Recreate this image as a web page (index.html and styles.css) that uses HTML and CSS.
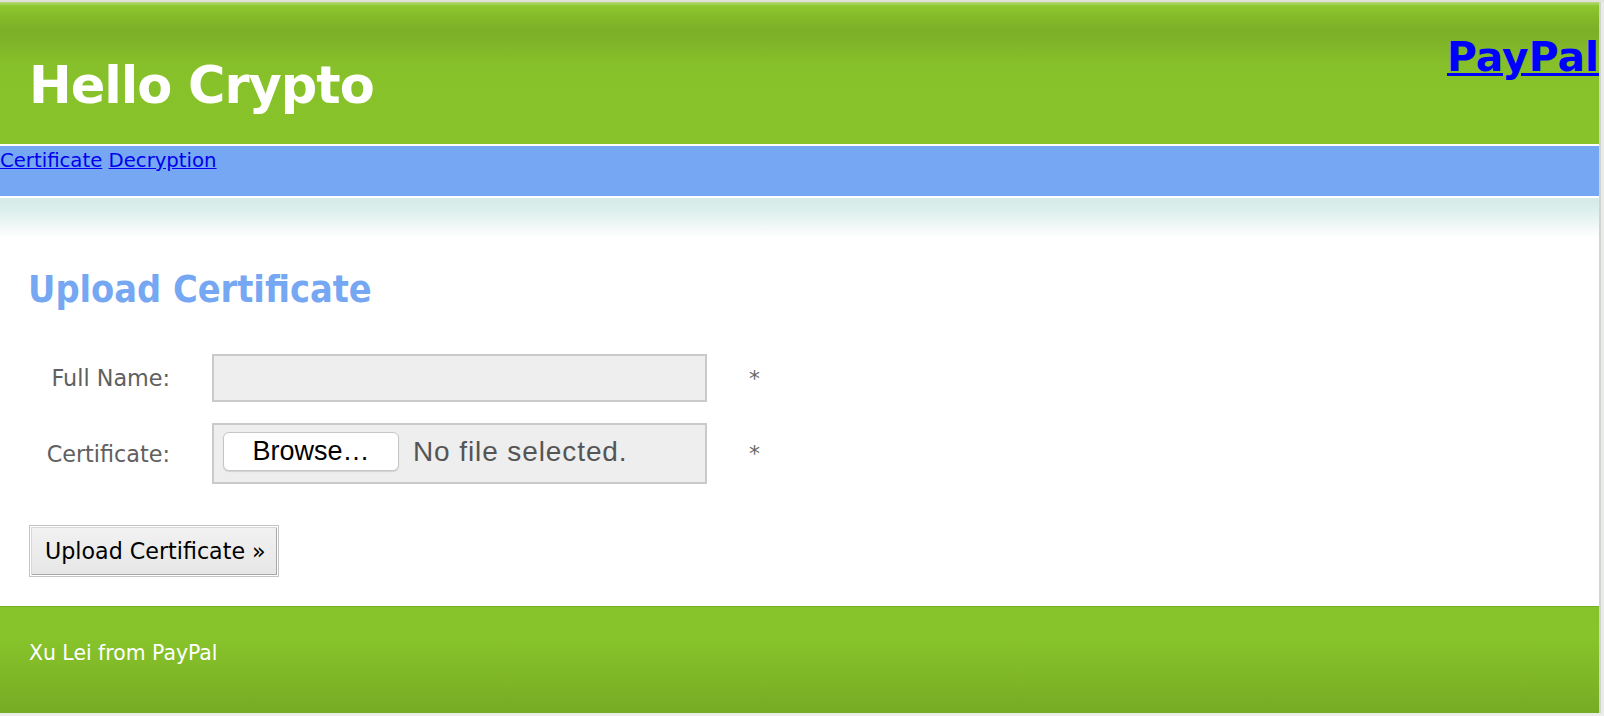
FILE: index.html
```html
<!DOCTYPE html>
<html lang="en">
<head>
<meta charset="utf-8">
<title>Hello Crypto</title>
<link rel="stylesheet" href="styles.css">
</head>
<body>
<div class="page">
  <header class="masthead">
    <h1 class="site-title">Hello Crypto</h1>
    <a class="brand-link" href="#">PayPal</a>
  </header>
  <nav class="menu">
    <a href="#">Certificate</a> <a href="#">Decryption</a>
  </nav>
  <main class="content">
    <h2 class="page-title">Upload Certificate</h2>
    <form class="upload-form">
      <div class="field-grid">
        <label class="field-label">Full Name:</label>
        <div class="text-box"></div>
        <span class="required">*</span>
        <label class="field-label">Certificate:</label>
        <div class="file-box">
          <span class="file-button">Browse…</span>
          <span class="file-status">No file selected.</span>
        </div>
        <span class="required">*</span>
      </div>
      <button type="button" class="submit-button">Upload Certificate »</button>
    </form>
  </main>
  <footer class="site-footer">Xu Lei from PayPal</footer>
</div>
</body>
</html>
```
FILE: styles.css
```css
html, body {
  margin: 0;
  padding: 0;
}
body {
  background: #e9ece8;
  height: 716px;
  overflow: hidden;
  border-top: 2px solid #e2e3dd;
  box-sizing: border-box;
  font-family: "DejaVu Sans", Verdana, sans-serif;
}
.page {
  width: 1599px;
  box-shadow: 2px 0 0 #cfd5cf;
}
.masthead {
  height: 144px;
  display: flex;
  justify-content: space-between;
  align-items: flex-start;
  padding-left: 29px;
  box-sizing: border-box;
  border-bottom: 2px solid #ffffff;
  background: linear-gradient(to bottom,
    #b6da7c 0px, #8fc730 4px, #86bd2a 12px, #7cb027 28px,
    #7fb428 40px, #86bf2a 60px, #88c22a 80px, #88c32a 100%);
}
.site-title {
  margin: 54px 0 0;
  font-weight: 700;
  font-size: 51px;
  line-height: 60px;
  letter-spacing: -1px;
  color: #ffffff;
}
.brand-link {
  margin-top: 31px;
  font-weight: 700;
  font-size: 40.8px;
  line-height: 48px;
  color: #0000ff;
  text-decoration: underline;
  text-decoration-thickness: 3px;
}
.menu {
  height: 52px;
  box-sizing: border-box;
  padding-top: 3px;
  background: #76a7f2;
  border-bottom: 2px solid #ffffff;
  font-size: 19.7px;
}
.menu a {
  color: #0000ee;
}
.content {
  padding: 70px 31px 29px 28px;
  background: linear-gradient(to bottom, #d5ebe8 0px, #dcefec 12px, #f3f9f8 30px, #ffffff 40px);
}
.page-title {
  margin: 0;
  font-family: "DejaVu Sans", sans-serif;
  font-stretch: condensed;
  font-weight: 700;
  font-size: 37.5px;
  line-height: 43px;
  color: #76a7f2;
}
.upload-form {
  margin: 0;
}
.field-grid {
  margin-top: 43px;
  display: grid;
  grid-template-columns: 142px 495px auto;
  column-gap: 42px;
  row-gap: 21px;
  align-items: center;
}
.field-label {
  text-align: right;
  font-size: 22.3px;
  color: #606060;
}
.required {
  font-size: 22px;
  color: #666666;
}
.text-box {
  height: 48px;
  box-sizing: border-box;
  border: 2px solid #cacaca;
  background: #eeeeee;
}
.file-box {
  height: 61px;
  box-sizing: border-box;
  border: 2px solid #cacaca;
  background: #eeeeee;
  padding: 7px 9px 11px 9px;
  display: flex;
  align-items: center;
}
.file-button {
  width: 176px;
  height: 39px;
  box-sizing: border-box;
  display: flex;
  align-items: center;
  justify-content: center;
  background: #ffffff;
  border: 1px solid #c6c6c6;
  border-radius: 6px;
  box-shadow: 0 1px 1px rgba(0, 0, 0, 0.12);
  font-family: "Liberation Sans", Arial, sans-serif;
  font-size: 27px;
  color: #000000;
}
.file-status {
  margin-left: 14px;
  font-family: "Liberation Sans", Arial, sans-serif;
  font-size: 28px;
  letter-spacing: 0.9px;
  color: #555555;
}
.submit-button {
  display: block;
  margin: 41px 0 0 1px;
  width: 250px;
  height: 52px;
  padding: 0 0 0 15px;
  text-align: left;
  font-family: "DejaVu Sans", Verdana, sans-serif;
  font-size: 22.2px;
  color: #000000;
  background: linear-gradient(to bottom, #f2f2f2, #e6e6e6);
  border: 1px solid #c4c4c4;
  box-shadow: inset 1px 1px 0 #ffffff, inset -1px -1px 0 #ffffff,
              inset 2px 2px 0 #d8d8d8, inset -2px -2px 0 #a8a8a8;
  border-radius: 0;
}
.site-footer {
  height: 107px;
  box-sizing: border-box;
  border-top: 1px solid #76ae28;
  padding: 34px 0 0 29px;
  font-size: 20.4px;
  color: #ffffff;
  background: linear-gradient(to bottom, #86c22a 0px, #87c42b 30px, #7fb727 70px, #76ab24 100%);
}
```
